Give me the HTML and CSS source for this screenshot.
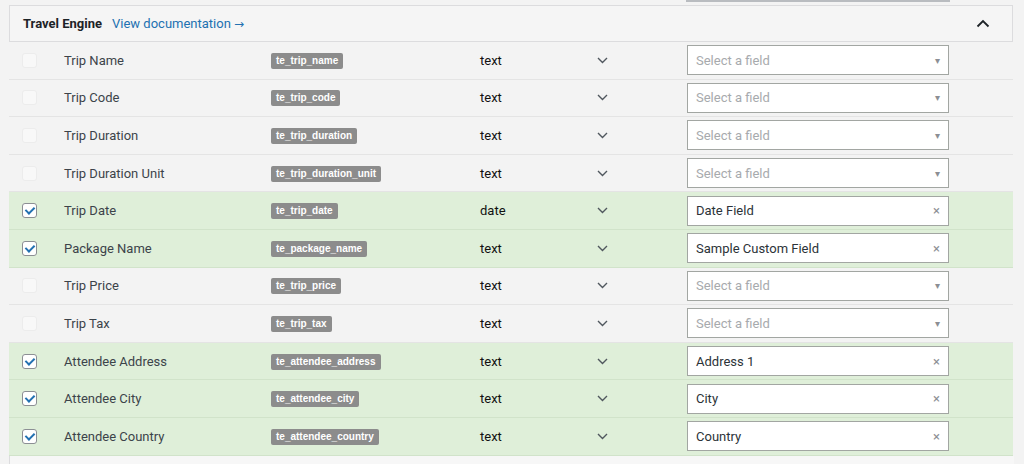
FILE: index.html
```html
<!DOCTYPE html>
<html>
<head>
    <link rel="stylesheet" href="styles.css">
</head>

<body>
    <div class="top-strip"><div class="prev-select"></div></div>

    <div class="panel">
        <div class="panel-head">
            <span class="panel-title">Travel Engine</span>
            <a href="#" class="doc-link">View documentation <span class="arrow">&rarr;</span></a>
            <svg class="toggle" width="14" height="9" viewBox="0 0 14 9"><path d="M1.5 7.5 L7 2 L12.5 7.5" fill="none" stroke="#1d2327" stroke-width="1.8"/></svg>
        </div>

        <div class="rows" id="rows"></div>
    </div>
    <div class="next-panel"></div>

<script>
    var fields = [
        ['Trip Name', 'te_trip_name', 'text', ''],
        ['Trip Code', 'te_trip_code', 'text', ''],
        ['Trip Duration', 'te_trip_duration', 'text', ''],
        ['Trip Duration Unit', 'te_trip_duration_unit', 'text', ''],
        ['Trip Date', 'te_trip_date', 'date', 'Date Field'],
        ['Package Name', 'te_package_name', 'text', 'Sample Custom Field'],
        ['Trip Price', 'te_trip_price', 'text', ''],
        ['Trip Tax', 'te_trip_tax', 'text', ''],
        ['Attendee Address', 'te_attendee_address', 'text', 'Address 1'],
        ['Attendee City', 'te_attendee_city', 'text', 'City'],
        ['Attendee Country', 'te_attendee_country', 'text', 'Country']
    ];

    var rows = document.getElementById('rows');
    var chevron = '<svg width="11" height="7" viewBox="0 0 11 7"><path d="M1 1 L5.5 5.5 L10 1" fill="none" stroke="#50575e" stroke-width="1.4"/></svg>';

    fields.forEach(function(f) {
        var on = f[3] !== '';
        var row = document.createElement('div');
        row.className = 'row' + (on ? ' active' : '');
        row.innerHTML =
            '<span class="check' + (on ? ' checked' : '') + '"></span>' +
            '<span class="label">' + f[0] + '</span>' +
            '<span class="key"><code>' + f[1] + '</code></span>' +
            '<span class="type">' + f[2] + '</span>' +
            '<span class="chev">' + chevron + '</span>' +
            '<span class="select' + (on ? '' : ' empty') + '">' +
                '<span class="value">' + (on ? f[3] : 'Select a field') + '</span>' +
                '<span class="icon">' + (on ? '&times;' : '&#9662;') + '</span>' +
            '</span>';
        rows.appendChild(row);
    });
</script>
</body>
</html>
```

FILE: styles.css
```css
body, html {
margin: 0;
padding: 0;
}

body {
background-color: #f3f3f3;
font-family: Roboto, "Noto Sans", sans-serif;
font-size: 13px;
color: #3c434a;
}

.top-strip {
height: 5px;
}

.prev-select {
margin-left: 686px;
width: 264px;
height: 2px;
background-color: #b9bcc0;
}

.panel {
margin-left: 9px;
width: 1004px;
}

.panel-head {
box-sizing: border-box;
height: 37px;
border: 1px solid #dcdcde;
background-color: #f5f5f5;
display: flex;
align-items: center;
padding-left: 13px;
padding-right: 22px;
}

.panel-title {
font-weight: 700;
color: #1d2327;
}

.doc-link {
margin-left: 10px;
color: #2271b1;
text-decoration: none;
}

.doc-link .arrow {
font-family: "DejaVu Sans", sans-serif;
font-size: 12px;
}

.toggle {
margin-left: auto;
}

.row {
height: 37.6px;
box-sizing: border-box;
border-bottom: 1px solid #e4e4e4;
display: grid;
grid-template-columns: 42px 207px 209px 117px 90px 262px;
align-items: center;
padding-left: 13px;
}

.row.active {
background-color: #dfefd9;
border-bottom-color: #d1e3ca;
}

.check {
width: 15px;
height: 15px;
box-sizing: border-box;
border: 1px solid #ececec;
border-radius: 3px;
background-color: #f8f8f8;
position: relative;
}

.check.checked {
border-color: #8c8f94;
background-color: #fff;
}

.check.checked::after {
content: "";
position: absolute;
left: 4px;
top: 1px;
width: 4px;
height: 7px;
border-right: 2px solid #2271b1;
border-bottom: 2px solid #2271b1;
transform: rotate(45deg);
}

.label {
color: #3c434a;
}

.key code {
display: inline-block;
font-family: "Liberation Sans", sans-serif;
font-size: 10px;
line-height: 12px;
font-weight: 700;
color: #fff;
background-color: #8c8c8c;
border-radius: 2px;
padding: 2px 5px;
}

.type {
color: #111;
}

.chev {
display: flex;
align-items: center;
}

.select {
height: 30px;
box-sizing: border-box;
border: 1px solid #a2a6a2;
background-color: #fff;
display: flex;
align-items: center;
padding-left: 8px;
padding-right: 8px;
color: #2c3338;
}

.select .value {
flex: 1;
}

.select.empty {
color: #a7aaad;
}

.select .icon {
color: #8c8f94;
font-size: 13px;
}

.select.empty .icon {
font-size: 10px;
}

.next-panel {
margin-left: 9px;
width: 1004px;
height: 10px;
border-left: 1px solid #dcdcde;
background-color: #f7f7f7;
}
```
